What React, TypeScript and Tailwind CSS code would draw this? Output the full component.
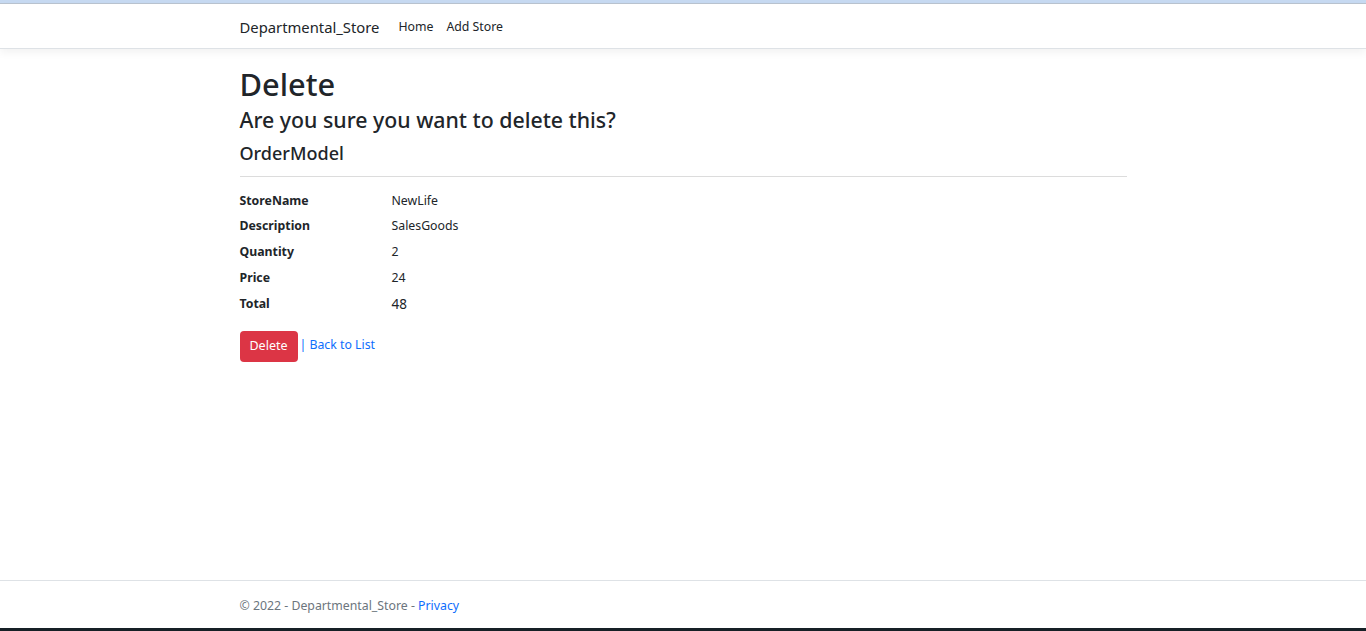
export default function App() {
  const rows: [string, string, string?][] = [
    ["StoreName", "NewLife"],
    ["Description", "SalesGoods"],
    ["Quantity", "2"],
    ["Price", "24"],
    ["Total", "48", "big"],
  ];

  return (
    <div
      className="flex h-[631px] flex-col bg-white text-[#212529]"
      style={{ fontFamily: '"Noto Sans", "Open Sans", sans-serif' }}
    >
      <div className="h-[3px] bg-[#c6d9f1]" />
      <div className="h-px bg-[#b9c3cf]" />
      <nav className="border-b border-[#dee2e6] bg-white shadow-[0_4px_8px_rgba(0,0,0,0.05)]">
        <div className="mx-auto flex h-[44px] w-[887px] items-center pt-[3px]">
          <span className="mr-[19px] text-[14.8px] text-[#212529]">Departmental_Store</span>
          <a className="mr-[13px] text-[12.3px] text-[#212529]">Home</a>
          <a className="text-[12.3px] text-[#212529]">Add Store</a>
        </div>
      </nav>

      <main className="mx-auto w-[887px] flex-1">
        <h1 className="mt-[18px] text-[30.8px] font-medium leading-[34px]">Delete</h1>
        <h3 className="mt-[6px] text-[21.3px] font-medium leading-[26px]">Are you sure you want to delete this?</h3>
        <h4 className="mt-[8px] text-[18px] font-medium leading-[24px]">OrderModel</h4>
        <hr className="mt-[11px] border-[#dcdcdc]" />
        <dl className="mt-[11px]">
          {rows.map(([k, v, big]) => (
            <div key={k} className="flex h-[25.8px] items-center">
              <dt className="w-[152px] text-[12.3px] font-bold">{k}</dt>
              <dd className={big ? "text-[13.5px]" : "text-[12.3px]"}>{v}</dd>
            </div>
          ))}
        </dl>
        <div className="mt-[14px] flex items-start">
          <button className="h-[31px] w-[58px] rounded-[4px] bg-[#dc3545] text-[12.5px] text-white">
            Delete
          </button>
          <a className="ml-[2px] mt-[5px] text-[12.3px] text-[#0d6efd]">|&nbsp;Back to List</a>
        </div>
      </main>

      <footer className="h-[48px] border-t border-[#dee2e6]">
        <div className="mx-auto flex h-full w-[887px] items-center pt-[4px] text-[12.3px] text-[#6c757d]">
          <span>
            © 2022 - Departmental_Store - <a className="text-[#0d6efd]">Privacy</a>
          </span>
        </div>
      </footer>
      <div className="h-[3px] bg-[#162026]" />
    </div>
  );
}
